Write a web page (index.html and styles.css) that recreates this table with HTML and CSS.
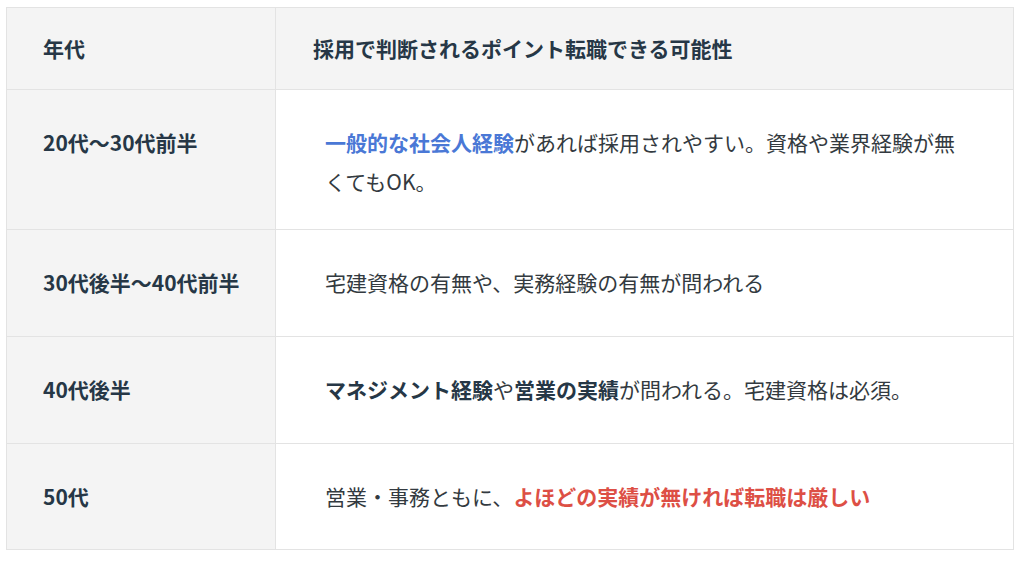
FILE: index.html
```html
<!DOCTYPE html>
<html lang="ja">
<head>
<meta charset="utf-8">
<title>年代別 転職の可能性</title>
<link rel="stylesheet" href="styles.css">
</head>
<body>
<div class="table">
  <div class="cell head col1">年代</div>
  <div class="cell head col2">採用で判断されるポイント転職できる可能性</div>

  <div class="cell col1 label">20代～30代前半</div>
  <div class="cell col2 body"><p><strong class="blue">一般的な社会人経験</strong>があれば採用されやすい。資格や業界経験が無くてもOK。</p></div>

  <div class="cell col1 label">30代後半～40代前半</div>
  <div class="cell col2 body"><p>宅建資格の有無や、実務経験の有無が問われる</p></div>

  <div class="cell col1 label">40代後半</div>
  <div class="cell col2 body"><p><strong>マネジメント経験</strong>や<strong>営業の実績</strong>が問われる。宅建資格は必須。</p></div>

  <div class="cell col1 label">50代</div>
  <div class="cell col2 body"><p>営業・事務ともに、<strong class="red">よほどの実績が無ければ転職は厳しい</strong></p></div>
</div>
</body>
</html>
```

FILE: styles.css
```css
html, body {
  margin: 0;
  padding: 0;
  background: #ffffff;
}

body {
  padding: 7px 0 0 6px;
  font-family: "Noto Sans CJK JP", "Noto Sans", sans-serif;
  font-size: 21px;
  line-height: 39px;
  color: #333333;
}

.table {
  width: 1008px;
  box-sizing: border-box;
  display: grid;
  grid-template-columns: 269px 1fr;
  grid-template-rows: 82px 140px 107px 107px 106px;
  border-top: 1px solid #e3e3e3;
  border-left: 1px solid #e3e3e3;
  border-right: 1px solid #e3e3e3;
}

.cell {
  border-bottom: 1px solid #e3e3e3;
  box-sizing: border-box;
  min-width: 0;
  padding-top: 33px;
}

.cell p {
  margin: 0;
}

.col1 {
  border-right: 1px solid #e3e3e3;
  background: #f4f4f4;
  padding-left: 36px;
  font-weight: 700;
  color: #263746;
}

.head {
  background: #f4f4f4;
  font-weight: 700;
  color: #263746;
  padding-top: 21px;
}

.head.col2 {
  padding-left: 37px;
}

.body {
  padding-left: 49px;
  padding-right: 48px;
  color: #333a40;
}

.body strong {
  font-weight: 700;
  color: #263746;
}

.body strong.blue {
  color: #4a78d6;
}

.body strong.red {
  color: #dd4f45;
}
```
